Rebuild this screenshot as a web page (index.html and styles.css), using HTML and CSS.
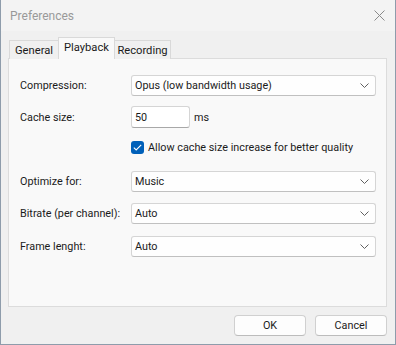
FILE: index.html
```html
<!DOCTYPE html>
<html>
<head>
<meta charset="utf-8">
<link rel="stylesheet" href="styles.css">
</head>
<body>
<div class="window">
  <div class="titlebar">
    <span class="title">Preferences</span>
    <svg class="close" width="11" height="11" viewBox="0 0 11 11"><path d="M0.5 0.5 L10.5 10.5 M10.5 0.5 L0.5 10.5" stroke="#8a8a8a" stroke-width="1" fill="none"/></svg>
  </div>
  <div class="body">
    <div class="tabs">
      <div class="tab t-general">General</div>
      <div class="tab t-playback active">Playback</div>
      <div class="tab t-recording">Recording</div>
    </div>
    <div class="panel">
      <div class="row r1">
        <label class="lbl">Compression:</label>
        <div class="select">Opus (low bandwidth usage)<svg class="chev" width="9" height="5" viewBox="0 0 9 5"><path d="M0.5 0.5 L4.5 4.5 L8.5 0.5" stroke="#606060" fill="none"/></svg></div>
      </div>
      <div class="row r2">
        <label class="lbl">Cache size:</label>
        <div class="input">50</div>
        <span class="unit">ms</span>
      </div>
      <div class="row r3">
        <span class="lbl"></span>
        <span class="check"><svg width="9" height="7" viewBox="0 0 9 7"><path d="M0.8 3.6 L3.2 6 L8.2 0.8" stroke="#fff" stroke-width="1.1" fill="none"/></svg></span>
        <span class="checktext">Allow cache size increase for better quality</span>
      </div>
      <div class="row r4">
        <label class="lbl">Optimize for:</label>
        <div class="select">Music<svg class="chev" width="9" height="5" viewBox="0 0 9 5"><path d="M0.5 0.5 L4.5 4.5 L8.5 0.5" stroke="#606060" fill="none"/></svg></div>
      </div>
      <div class="row r5">
        <label class="lbl">Bitrate (per channel):</label>
        <div class="select">Auto<svg class="chev" width="9" height="5" viewBox="0 0 9 5"><path d="M0.5 0.5 L4.5 4.5 L8.5 0.5" stroke="#606060" fill="none"/></svg></div>
      </div>
      <div class="row r6">
        <label class="lbl">Frame lenght:</label>
        <div class="select">Auto<svg class="chev" width="9" height="5" viewBox="0 0 9 5"><path d="M0.5 0.5 L4.5 4.5 L8.5 0.5" stroke="#606060" fill="none"/></svg></div>
      </div>
    </div>
    <div class="buttons">
      <div class="btn">OK</div>
      <div class="btn">Cancel</div>
    </div>
  </div>
</div>
</body>
</html>
```
FILE: styles.css
```css
* { box-sizing: border-box; }
html, body { margin: 0; padding: 0; }
body {
  width: 396px;
  height: 345px;
  font-family: Roboto, "Noto Sans", sans-serif;
  font-size: 10.8px;
  color: #1b1b1b;
  background: #f0f0f0;
}
.window {
  width: 396px;
  height: 345px;
  border: 1px solid #8e9cab;
  border-top: none;
  background: #f0f0f0;
  display: flex;
  flex-direction: column;
}
.titlebar {
  height: 31px;
  background: #f3f3f3;
  display: flex;
  align-items: center;
  justify-content: space-between;
  padding: 0 10px 0 9px;
}
.title {
  color: #999999;
  font-size: 12px;
}
.close { display: block; margin-bottom: 1px; }
.body {
  flex: 1;
  display: flex;
  flex-direction: column;
  padding: 7px 8px 0 7px;
}
.tabs {
  display: flex;
  align-items: flex-end;
  height: 21px;
  padding-left: 1px;
  position: relative;
  z-index: 1;
  margin-bottom: -1px;
}
.tab {
  height: 19px;
  border: 1px solid #d9d9d9;
  border-bottom: none;
  background: #f0f0f0;
  display: flex;
  align-items: center;
  justify-content: center;
  font-size: 11.2px;
}
.tab.t-general { width: 49px; border-right: none; }
.tab.t-playback { width: 57px; }
.tab.t-recording { width: 56px; border-left: none; }
.tab.active {
  height: 22px;
  background: #f9f9f9;
  padding-bottom: 2px;
}
.panel {
  height: 249px;
  border: 1px solid #dcdcdc;
  background: #f9f9f9;
  padding: 16px 10px 0 11px;
  display: flex;
  flex-direction: column;
}
.row {
  display: flex;
  align-items: center;
}
.lbl { width: 111px; flex: none; }
.select {
  flex: 1;
  height: 21px;
  border: 1px solid #d5d5d5;
  border-bottom-color: #c0c0c0;
  border-radius: 3px;
  background: #fefefe;
  padding: 0 6px 0 3px;
  display: flex;
  align-items: center;
  justify-content: space-between;
}
.input {
  width: 59px;
  height: 22px;
  border: 1px solid #d5d5d5;
  border-bottom-color: #a8a8a8;
  border-radius: 3px;
  background: #ffffff;
  padding: 0 3px;
  display: flex;
  align-items: center;
}
.unit { margin-left: 4px; }
.check {
  width: 13px;
  height: 13px;
  border-radius: 3px;
  background: #0060b9;
  display: flex;
  align-items: center;
  justify-content: center;
  margin-right: 4px;
}
.check svg { display: block; }
.r2 { margin-top: 10px; }
.r3 { margin-top: 13px; }
.r4 { margin-top: 17px; }
.r5 { margin-top: 11px; }
.r6 { margin-top: 12px; }
.buttons {
  display: flex;
  justify-content: flex-end;
  gap: 9px;
  margin-top: 8px;
}
.btn {
  width: 72px;
  height: 21px;
  border: 1px solid #d0d0d0;
  border-bottom-color: #bcbcbc;
  border-radius: 4px;
  background: #fdfdfd;
  display: flex;
  align-items: center;
  justify-content: center;
}
```
